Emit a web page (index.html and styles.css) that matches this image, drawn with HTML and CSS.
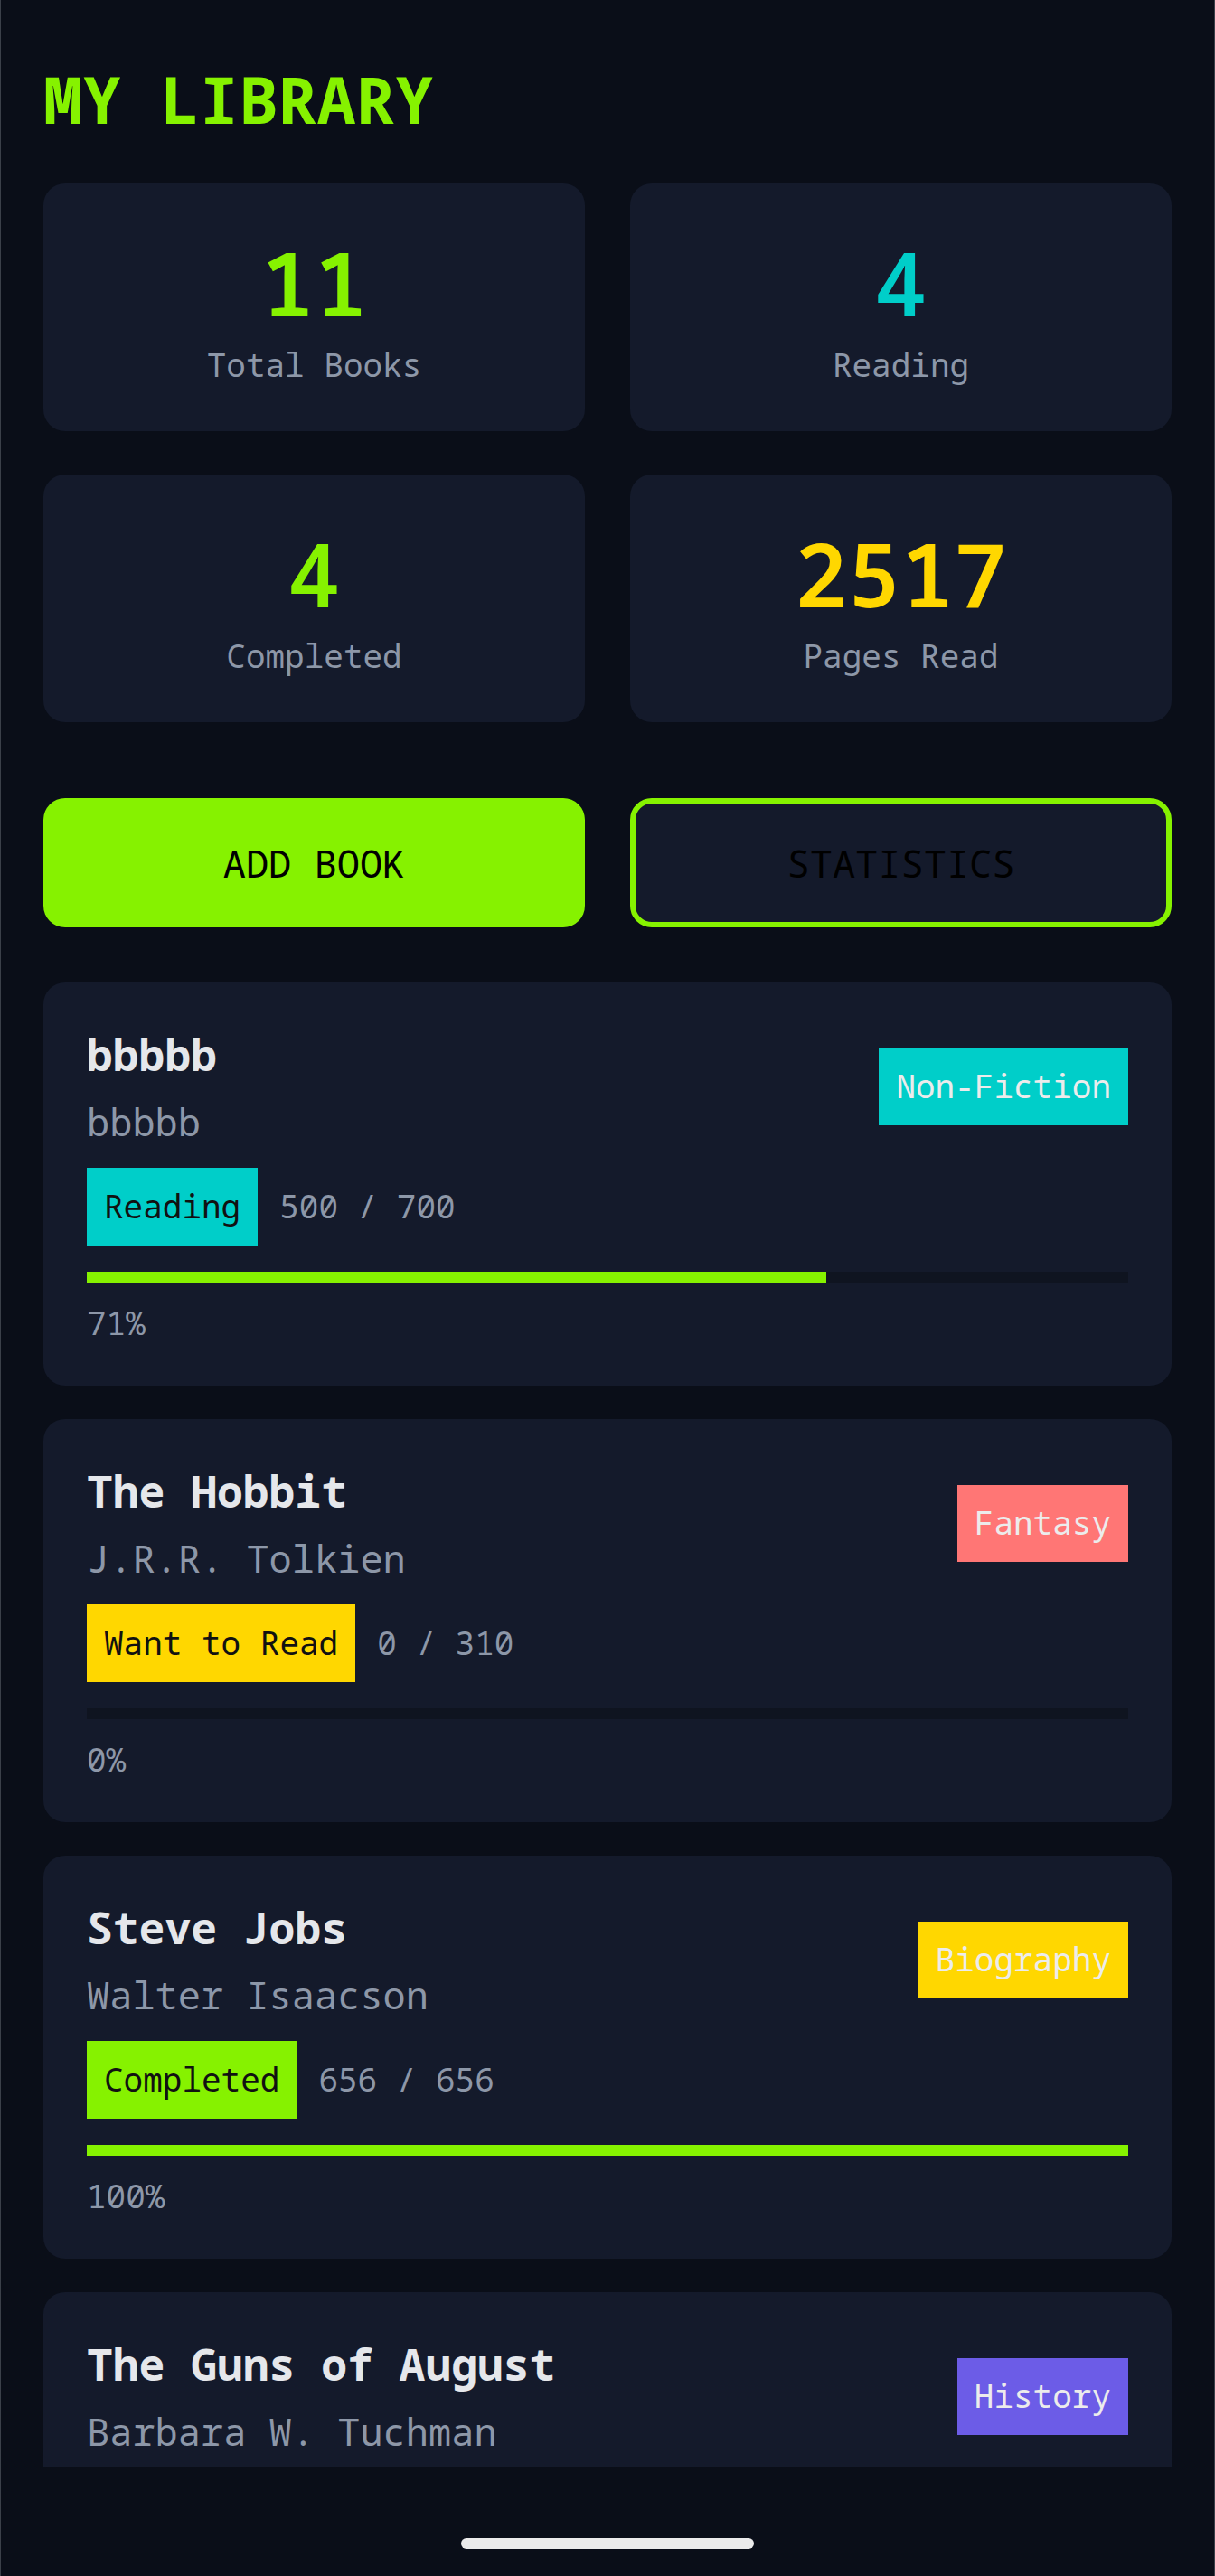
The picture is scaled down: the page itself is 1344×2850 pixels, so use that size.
FILE: index.html
```html
<!DOCTYPE html>
<html lang="en">
<head>
<meta charset="utf-8">
<title>My Library</title>
<link rel="stylesheet" href="styles.css">
</head>
<body>
<div class="screen">
  <div class="scroll">
    <main class="page">
      <h1 class="app-title">MY LIBRARY</h1>

      <section class="stats">
        <div class="stat-card">
          <div class="stat-value lime">11</div>
          <div class="stat-label">Total Books</div>
        </div>
        <div class="stat-card">
          <div class="stat-value teal">4</div>
          <div class="stat-label">Reading</div>
        </div>
        <div class="stat-card">
          <div class="stat-value lime">4</div>
          <div class="stat-label">Completed</div>
        </div>
        <div class="stat-card">
          <div class="stat-value gold">2517</div>
          <div class="stat-label">Pages Read</div>
        </div>
      </section>

      <section class="actions">
        <button class="btn btn-primary">ADD BOOK</button>
        <button class="btn btn-outline">STATISTICS</button>
      </section>

      <section class="books">
        <article class="book-card">
          <div class="book-head">
            <div class="book-info">
              <div class="book-title">bbbbb</div>
              <div class="book-author">bbbbb</div>
            </div>
            <span class="category cat-nonfiction">Non-Fiction</span>
          </div>
          <div class="status-row">
            <span class="status status-reading">Reading</span>
            <span class="pages">500 / 700</span>
          </div>
          <div class="progress"><div class="progress-fill" style="width:71%"></div></div>
          <div class="percent">71%</div>
        </article>

        <article class="book-card">
          <div class="book-head">
            <div class="book-info">
              <div class="book-title">The Hobbit</div>
              <div class="book-author">J.R.R. Tolkien</div>
            </div>
            <span class="category cat-fantasy">Fantasy</span>
          </div>
          <div class="status-row">
            <span class="status status-want">Want to Read</span>
            <span class="pages">0 / 310</span>
          </div>
          <div class="progress"><div class="progress-fill" style="width:0%"></div></div>
          <div class="percent">0%</div>
        </article>

        <article class="book-card">
          <div class="book-head">
            <div class="book-info">
              <div class="book-title">Steve Jobs</div>
              <div class="book-author">Walter Isaacson</div>
            </div>
            <span class="category cat-biography">Biography</span>
          </div>
          <div class="status-row">
            <span class="status status-done">Completed</span>
            <span class="pages">656 / 656</span>
          </div>
          <div class="progress"><div class="progress-fill" style="width:100%"></div></div>
          <div class="percent">100%</div>
        </article>

        <article class="book-card book-card-partial">
          <div class="book-head">
            <div class="book-info">
              <div class="book-title">The Guns of August</div>
              <div class="book-author">Barbara W. Tuchman</div>
            </div>
            <span class="category cat-history">History</span>
          </div>
        </article>
      </section>
    </main>
  </div>
  <div class="home-area">
    <div class="home-indicator"></div>
  </div>
</div>
</body>
</html>
```

FILE: styles.css
```css
* {
  box-sizing: border-box;
}

html, body {
  margin: 0;
  padding: 0;
  background: #0a0e18;
}

body {
  font-family: "Noto Sans Mono", "Droid Sans Mono", "DejaVu Sans Mono", "Liberation Mono", monospace;
  color: #e5e7eb;
}

.screen {
  width: 1344px;
  height: 2850px;
  background: #0a0e18;
  border-left: 1px solid #3b4049;
  border-right: 1px solid #3b4049;
  display: flex;
  flex-direction: column;
}

.scroll {
  height: 2729px;
  overflow: hidden;
  flex: none;
}

.page {
  padding: 68px 47px 0 47px;
}

.app-title {
  margin: 0;
  font-size: 72px;
  font-weight: bold;
  line-height: 82px;
  color: #86f200;
}

.stats {
  margin-top: 53px;
  display: grid;
  grid-template-columns: 599px 599px;
  column-gap: 50px;
  row-gap: 48px;
}

.stat-card {
  background: #141a2b;
  border-radius: 24px;
  height: 274px;
  padding-top: 51px;
  display: flex;
  flex-direction: column;
  align-items: center;
}

.stat-value {
  font-size: 98px;
  font-weight: 600;
  line-height: 116px;
}

.stat-label {
  margin-top: 13px;
  font-size: 36px;
  line-height: 42px;
  color: #8d97a8;
}

.lime { color: #86f200; }
.teal { color: #00cec9; }
.gold { color: #ffd700; }

.actions {
  margin-top: 84px;
  display: flex;
  gap: 50px;
}

.btn {
  width: 599px;
  height: 143px;
  border-radius: 24px;
  font-family: inherit;
  font-size: 42px;
  color: #000;
  display: flex;
  align-items: center;
  justify-content: center;
  padding: 0;
}

.btn-primary {
  background: #86f200;
  border: none;
}

.btn-outline {
  background: #141a2b;
  border: 6px solid #86f200;
}

.books {
  margin-top: 61px;
  display: flex;
  flex-direction: column;
  gap: 37px;
}

.book-card {
  background: #141a2b;
  border-radius: 24px;
  padding: 48px;
}

.book-card-partial {
  min-height: 260px;
}

.book-head {
  display: flex;
  justify-content: space-between;
  align-items: center;
}

.book-title {
  font-size: 48px;
  font-weight: bold;
  line-height: 63px;
  color: #e5e7eb;
}

.book-author {
  margin-top: 14px;
  font-size: 42px;
  line-height: 58px;
  color: #8d97a8;
}

.category {
  font-size: 36px;
  line-height: 42px;
  padding: 21px 19px 22px;
  color: #ececec;
}

.cat-nonfiction { background: #00cec9; }
.cat-fantasy { background: #ff7675; }
.cat-biography { background: #ffd700; }
.cat-history { background: #6c5ce7; }

.status-row {
  margin-top: 22px;
  display: flex;
  align-items: center;
}

.status {
  font-size: 36px;
  line-height: 42px;
  padding: 22px 19px;
  color: #111;
}

.status-reading { background: #00cec9; }
.status-want { background: #ffd700; }
.status-done { background: #86f200; }

.pages {
  margin-left: 24px;
  font-size: 36px;
  line-height: 42px;
  color: #8d97a8;
}

.progress {
  margin-top: 29px;
  height: 12px;
  background: #0f1420;
}

.progress-fill {
  height: 100%;
  background: #86f200;
}

.percent {
  margin-top: 24px;
  font-size: 36px;
  line-height: 42px;
  color: #8d97a8;
}

.home-area {
  flex: 1;
  display: flex;
  justify-content: center;
  padding-top: 79px;
}

.home-indicator {
  width: 324px;
  height: 12px;
  border-radius: 6px;
  background: #ebebeb;
}
```
